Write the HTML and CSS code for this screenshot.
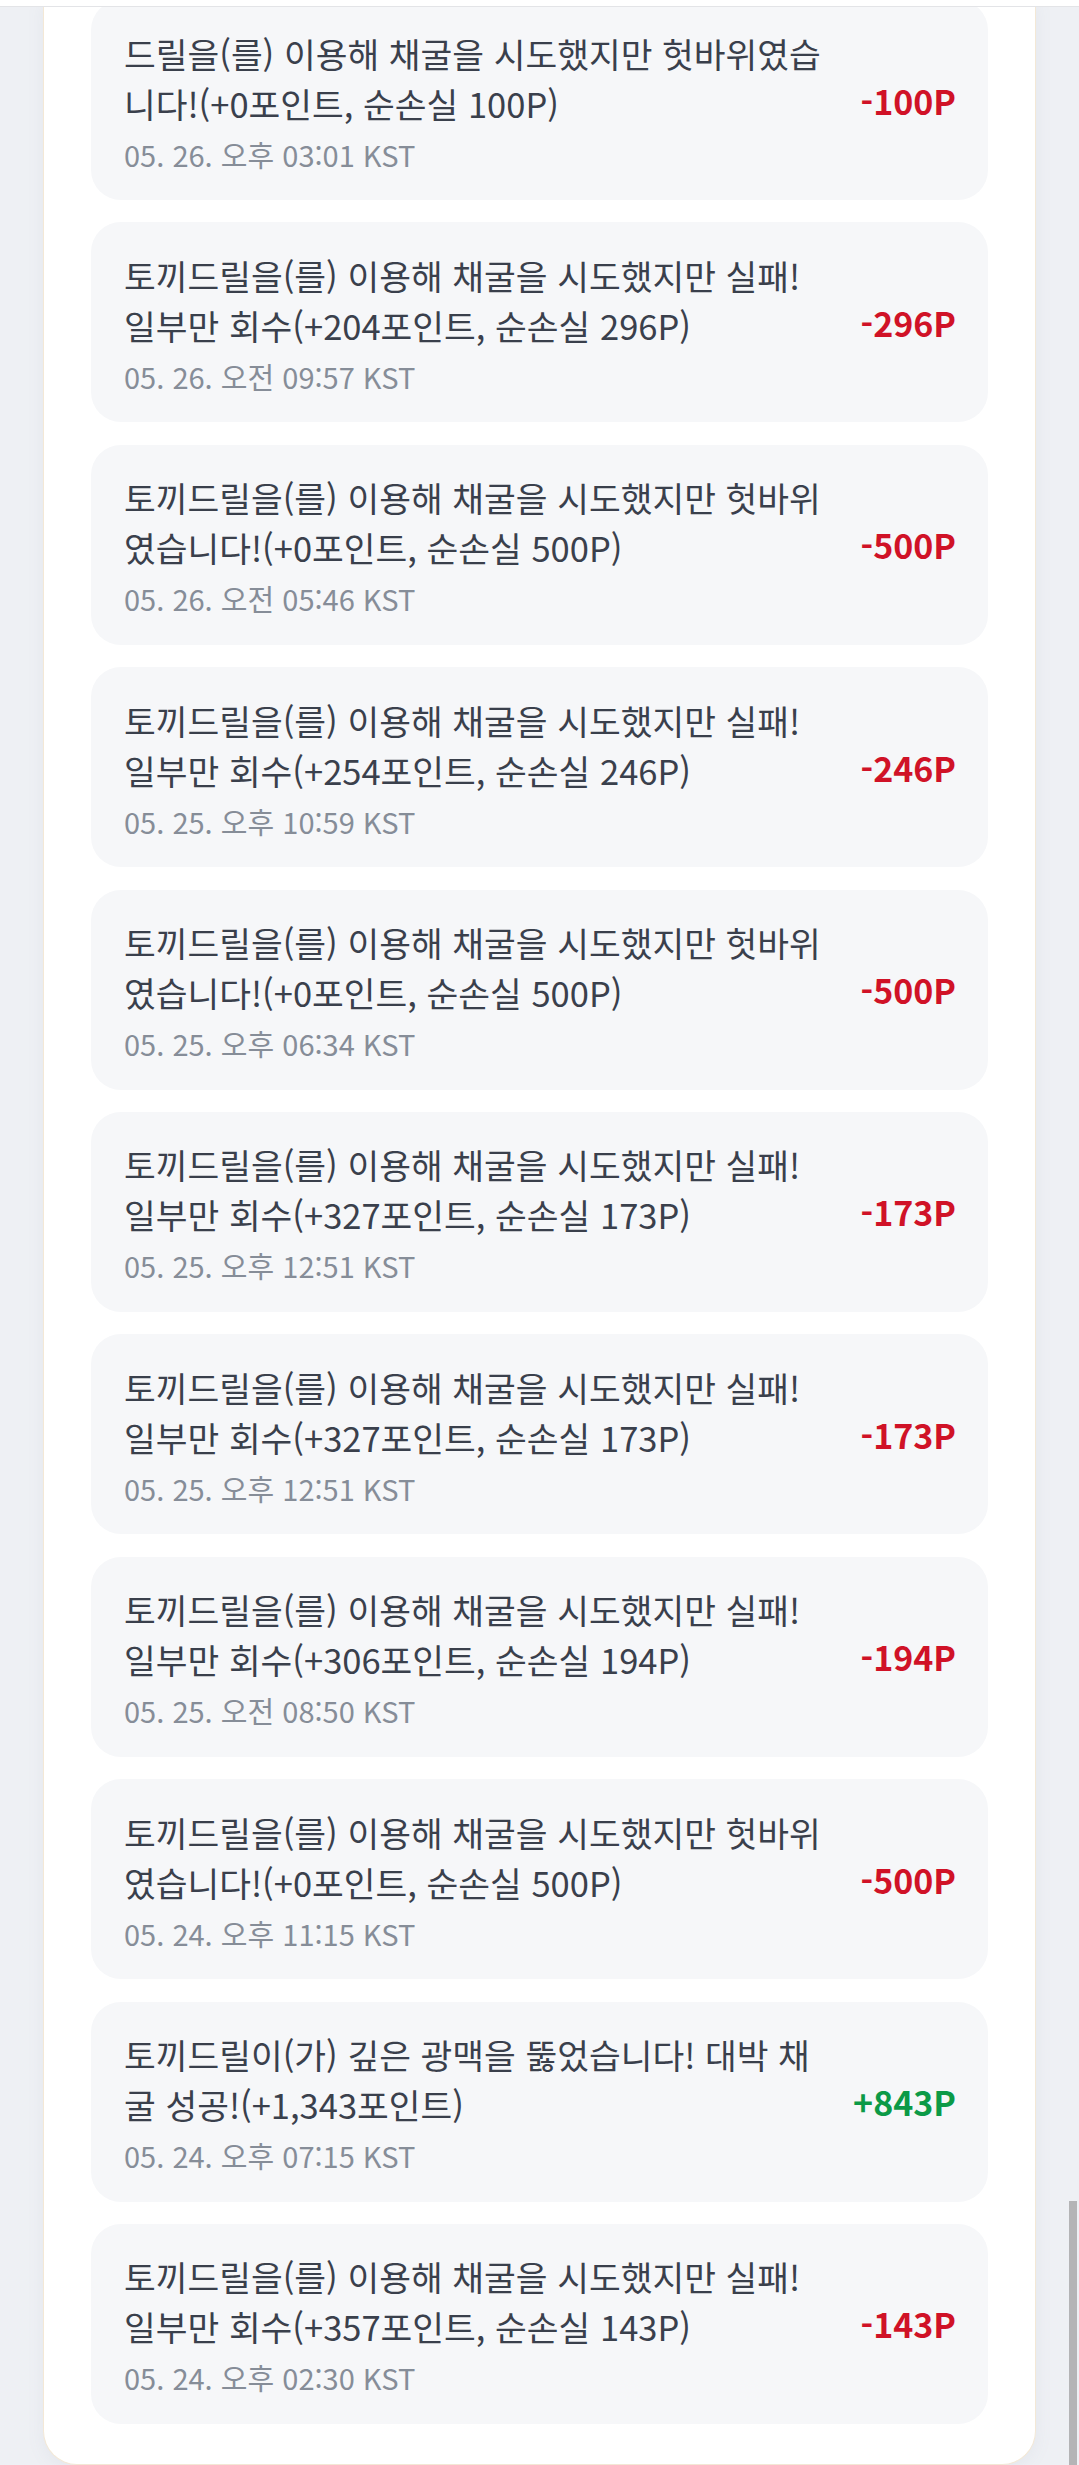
FILE: index.html
```html
<!DOCTYPE html>
<html lang="ko">
  <head>
    <meta charset="UTF-8" />
    <meta name="viewport" content="width=device-width, initial-scale=1.0" />
    <title>채굴 기록</title>
    <link rel="stylesheet" href="styles.css">
  </head>
  <body>
    <div class="top-bar"></div>
    <div class="page">
      <div class="history-box">
        <ul class="history-list">
          <li class="history-item">
            <div class="item-text">
              <p class="item-message">드릴을(를) 이용해 채굴을 시도했지만 헛바위였습니다!(+0포인트, 순손실 100P)</p>
              <p class="item-time">05. 26. 오후 03:01 KST</p>
            </div>
            <div class="item-amount minus">-100P</div>
          </li>
          <li class="history-item">
            <div class="item-text">
              <p class="item-message">토끼드릴을(를) 이용해 채굴을 시도했지만 실패! 일부만 회수(+204포인트, 순손실 296P)</p>
              <p class="item-time">05. 26. 오전 09:57 KST</p>
            </div>
            <div class="item-amount minus">-296P</div>
          </li>
          <li class="history-item">
            <div class="item-text">
              <p class="item-message">토끼드릴을(를) 이용해 채굴을 시도했지만 헛바위였습니다!(+0포인트, 순손실 500P)</p>
              <p class="item-time">05. 26. 오전 05:46 KST</p>
            </div>
            <div class="item-amount minus">-500P</div>
          </li>
          <li class="history-item">
            <div class="item-text">
              <p class="item-message">토끼드릴을(를) 이용해 채굴을 시도했지만 실패! 일부만 회수(+254포인트, 순손실 246P)</p>
              <p class="item-time">05. 25. 오후 10:59 KST</p>
            </div>
            <div class="item-amount minus">-246P</div>
          </li>
          <li class="history-item">
            <div class="item-text">
              <p class="item-message">토끼드릴을(를) 이용해 채굴을 시도했지만 헛바위였습니다!(+0포인트, 순손실 500P)</p>
              <p class="item-time">05. 25. 오후 06:34 KST</p>
            </div>
            <div class="item-amount minus">-500P</div>
          </li>
          <li class="history-item">
            <div class="item-text">
              <p class="item-message">토끼드릴을(를) 이용해 채굴을 시도했지만 실패! 일부만 회수(+327포인트, 순손실 173P)</p>
              <p class="item-time">05. 25. 오후 12:51 KST</p>
            </div>
            <div class="item-amount minus">-173P</div>
          </li>
          <li class="history-item">
            <div class="item-text">
              <p class="item-message">토끼드릴을(를) 이용해 채굴을 시도했지만 실패! 일부만 회수(+327포인트, 순손실 173P)</p>
              <p class="item-time">05. 25. 오후 12:51 KST</p>
            </div>
            <div class="item-amount minus">-173P</div>
          </li>
          <li class="history-item">
            <div class="item-text">
              <p class="item-message">토끼드릴을(를) 이용해 채굴을 시도했지만 실패! 일부만 회수(+306포인트, 순손실 194P)</p>
              <p class="item-time">05. 25. 오전 08:50 KST</p>
            </div>
            <div class="item-amount minus">-194P</div>
          </li>
          <li class="history-item">
            <div class="item-text">
              <p class="item-message">토끼드릴을(를) 이용해 채굴을 시도했지만 헛바위였습니다!(+0포인트, 순손실 500P)</p>
              <p class="item-time">05. 24. 오후 11:15 KST</p>
            </div>
            <div class="item-amount minus">-500P</div>
          </li>
          <li class="history-item">
            <div class="item-text">
              <p class="item-message">토끼드릴이(가) 깊은 광맥을 뚫었습니다! 대박 채굴 성공!(+1,343포인트)</p>
              <p class="item-time">05. 24. 오후 07:15 KST</p>
            </div>
            <div class="item-amount plus">+843P</div>
          </li>
          <li class="history-item">
            <div class="item-text">
              <p class="item-message">토끼드릴을(를) 이용해 채굴을 시도했지만 실패! 일부만 회수(+357포인트, 순손실 143P)</p>
              <p class="item-time">05. 24. 오후 02:30 KST</p>
            </div>
            <div class="item-amount minus">-143P</div>
          </li>
        </ul>
      </div>
    </div>
    <div class="scroll-thumb"></div>
  </body>
</html>
```

FILE: styles.css
```css
body {
  margin: 0;
  background-color: #eef0f4;
  font-family: "Noto Sans CJK KR", "Noto Sans", sans-serif;
  -webkit-font-smoothing: antialiased;
}

.top-bar {
  position: fixed;
  top: 0;
  left: 0;
  right: 0;
  height: 6px;
  background-color: #fff;
  border-bottom: 1px solid #e3e4e7;
  z-index: 10;
}

.page {
  padding: 0 43px;
}

.history-box {
  background-color: #fff;
  border: 1px solid #f3e8d6;
  border-top: none;
  border-radius: 0 0 34px 34px;
  padding: 0 47px 40px;
  box-shadow: 0 4px 18px rgba(120, 130, 150, 0.08);
}

.history-list {
  display: flex;
  flex-direction: column;
  gap: 22.4px;
  margin: 0;
  padding: 0;
  list-style: none;
}

.history-item {
  display: flex;
  align-items: center;
  gap: 28px;
  height: 200px;
  box-sizing: border-box;
  padding: 0 32px 0 33px;
  border-radius: 30px;
  background-color: #f6f7f9;
}

.item-text {
  flex: 1;
  min-width: 0;
}

.item-message {
  margin: 0;
  font-size: 34.5px;
  line-height: 50px;
  color: #3a404c;
}

.item-time {
  margin: 7px 0 0;
  font-size: 29px;
  line-height: 38px;
  color: #868d98;
}

.item-amount {
  flex-shrink: 0;
  font-size: 34px;
  font-weight: 700;
}

.minus {
  color: #d01227;
}

.plus {
  color: #0c9a47;
}

.scroll-thumb {
  position: fixed;
  right: 2px;
  bottom: 0;
  width: 8px;
  height: 264px;
  background-color: #b4b4b6;
}
```
